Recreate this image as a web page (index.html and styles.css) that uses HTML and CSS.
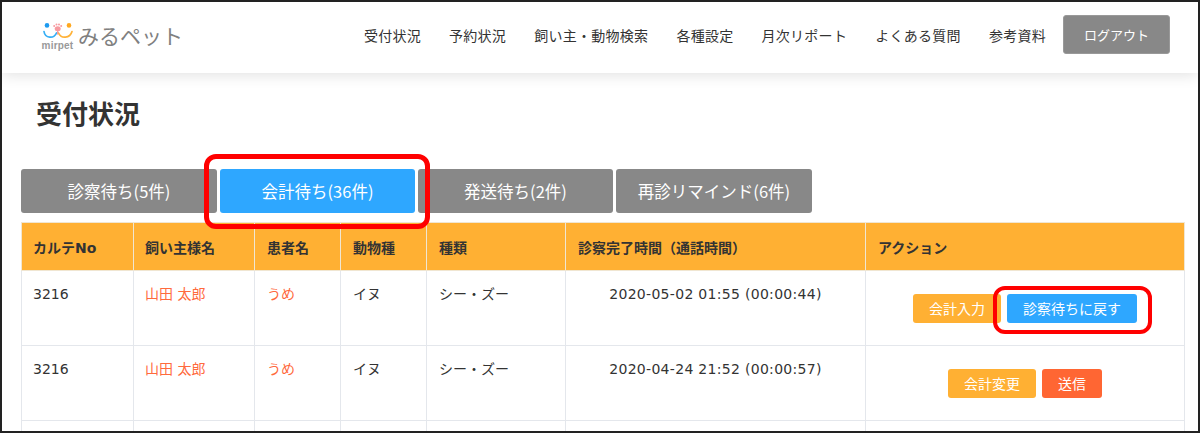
FILE: index.html
```html
<!DOCTYPE html>
<html lang="ja">
<head>
<meta charset="utf-8">
<title>受付状況</title>
<link rel="stylesheet" href="styles.css">
</head>
<body>
<div class="frame">
  <header class="header">
    <div class="logo">
      <div class="logo-mark">
        <svg class="logo-icon" width="30" height="16" viewBox="0 0 30 16" aria-hidden="true">
          <circle cx="4" cy="2.4" r="2.3" fill="#1e9bf0"/>
          <circle cx="26" cy="2.4" r="2.3" fill="#ffa81f"/>
          <path d="M1 8.5 C2 15.5 11 16 13.5 10" fill="none" stroke="#35aef5" stroke-width="1.7" stroke-linecap="round"/>
          <path d="M15.5 10 C18 16 27 15.5 29 8.5" fill="none" stroke="#ffb238" stroke-width="1.7" stroke-linecap="round"/>
          <ellipse cx="14.7" cy="5.8" rx="3" ry="2.5" fill="#f79aa0"/>
          <circle cx="11.2" cy="3" r="1" fill="#f79aa0"/>
          <circle cx="13.5" cy="1.5" r="1" fill="#f79aa0"/>
          <circle cx="16" cy="1.5" r="1" fill="#f79aa0"/>
          <circle cx="18.2" cy="3" r="1" fill="#f79aa0"/>
          <path d="M14.7 8 V11" stroke="#f79aa0" stroke-width="1.4" stroke-linecap="round"/>
        </svg>
        <span class="logo-en">mirpet</span>
      </div>
      <span class="logo-ja">みるペット</span>
    </div>
    <nav class="nav">
      <a class="nav-link">受付状況</a>
      <a class="nav-link">予約状況</a>
      <a class="nav-link">飼い主・動物検索</a>
      <a class="nav-link">各種設定</a>
      <a class="nav-link">月次リポート</a>
      <a class="nav-link">よくある質問</a>
      <a class="nav-link">参考資料</a>
      <button class="logout">ログアウト</button>
    </nav>
  </header>
  <main class="main">
    <h1 class="title">受付状況</h1>
    <div class="tabs">
      <div class="tab">診察待ち(5件)</div>
      <div class="tab tab-active">会計待ち(36件)</div>
      <div class="tab">発送待ち(2件)</div>
      <div class="tab">再診リマインド(6件)</div>
    </div>
    <table class="table">
      <colgroup>
        <col class="c1"><col class="c2"><col class="c3"><col class="c4"><col class="c5"><col class="c6"><col class="c7">
      </colgroup>
      <thead>
        <tr>
          <th>カルテNo</th><th>飼い主様名</th><th>患者名</th><th>動物種</th><th>種類</th><th>診察完了時間（通話時間）</th><th>アクション</th>
        </tr>
      </thead>
      <tbody>
        <tr class="row">
          <td>3216</td><td class="link">山田 太郎</td><td class="link">うめ</td><td>イヌ</td><td>シー・ズー</td>
          <td class="center">2020-05-02 01:55 (00:00:44)</td>
          <td class="actions"><div class="btns"><span class="btn orange">会計入力</span><span class="btn blue">診察待ちに戻す</span></div></td>
        </tr>
        <tr class="row">
          <td>3216</td><td class="link">山田 太郎</td><td class="link">うめ</td><td>イヌ</td><td>シー・ズー</td>
          <td class="center">2020-04-24 21:52 (00:00:57)</td>
          <td class="actions"><div class="btns"><span class="btn orange">会計変更</span><span class="btn coral">送信</span></div></td>
        </tr>
        <tr class="row">
          <td></td><td></td><td></td><td></td><td></td><td></td><td></td>
        </tr>
      </tbody>
    </table>
  </main>
  <div class="mark mark-tab"></div>
  <div class="mark mark-btn"></div>
</div>
</body>
</html>
```

FILE: styles.css
```css
* { box-sizing: border-box; }
html, body { margin: 0; padding: 0; background: #fff; }
body {
  font-family: "Noto Sans CJK JP", "Noto Sans", sans-serif;
  font-size: 14px;
  color: #333;
}
.frame {
  position: relative;
  width: 1200px;
  height: 433px;
  overflow: hidden;
  border: 2px solid #222;
}
.header {
  display: flex;
  align-items: center;
  justify-content: space-between;
  height: 71px;
  padding: 0 28px 6px 39px;
  background: #fff;
  box-shadow: 0 2px 14px rgba(0, 0, 0, .12);
  position: relative;
}
.logo { display: flex; align-items: center; gap: 4px; }
.logo-mark { display: flex; flex-direction: column; align-items: center; width: 33px; margin-top: 5px; }
.logo-icon { display: block; margin-bottom: 2px; }
.logo-en {
  font-family: "Liberation Sans", sans-serif;
  font-size: 10px;
  font-weight: 700;
  line-height: 10px;
  color: #999;
  letter-spacing: .2px;
}
.logo-ja { font-size: 21px; color: #808080; line-height: 30px; }
.nav { display: flex; align-items: center; }
.nav-link { margin-right: 28px; font-size: 14px; color: #333; white-space: nowrap; letter-spacing: .28px; }
.nav-link:nth-child(7) { margin-right: 17px; }
.logout {
  width: 107px;
  height: 39px;
  border: 1px solid #999;
  border-radius: 3px;
  background: #888;
  color: #fff;
  font: inherit;
  font-size: 13px;
}
.main { padding: 0 0 0 19px; }
.title {
  margin: 21px 0 0 15px;
  font-size: 26px;
  font-weight: 700;
  line-height: 38px;
  color: #333;
}
.tabs { display: flex; gap: 3px; margin-top: 37px; }
.tab {
  width: 195px;
  height: 44px;
  line-height: 44px;
  text-align: center;
  background: #888;
  color: #fff;
  border-radius: 3px;
  font-size: 16.5px;
}
.tab:first-child { width: 196px; }
.tab:last-child { width: 196px; }
.tab-active { background: #2ea7ff; }
.table {
  table-layout: fixed;
  border-collapse: collapse;
  width: 1163px;
  margin-top: 9px;
  background: #fff;
  font-family: "DejaVu Sans", "Noto Sans CJK JP", sans-serif;
}
.c1 { width: 112px; }
.c2 { width: 121px; }
.c3 { width: 86px; }
.c4 { width: 86px; }
.c5 { width: 139px; }
.c6 { width: 300px; }
.c7 { width: 319px; }
th, td { border: 1px solid #e4e7ec; padding: 0 12px; text-align: left; }
th:nth-child(-n+2), td:nth-child(-n+2) { padding-left: 11px; }
th {
  height: 48px;
  background: #ffb033;
  font-size: 14px;
  font-weight: 700;
  color: #333;
  border-color: #f0e6d2;
}
td { height: 75px; vertical-align: top; padding-top: 12px; line-height: 22px; color: #333; font-size: 14px; }
td.link { color: #ff6a3d; }
td.center { text-align: center; letter-spacing: .3px; }
td.actions { padding-top: 23px; font-family: "Noto Sans CJK JP", sans-serif; }
.btns { display: flex; justify-content: center; gap: 6px; }
.btn {
  height: 29px;
  padding: 0 16px;
  line-height: 28px;
  border-radius: 3px;
  color: #fff;
  font-size: 14px;
  white-space: nowrap;
}
.orange { background: #ffb033; }
.blue { background: #2ea7ff; }
.coral { background: #ff6633; }
.mark {
  position: absolute;
  border: 5px solid #f00;
  border-radius: 12px;
}
.mark-tab { left: 202px; top: 152px; width: 226px; height: 75px; }
.mark-btn { left: 991px; top: 284px; width: 159px; height: 48px; border-width: 4px; }
```
